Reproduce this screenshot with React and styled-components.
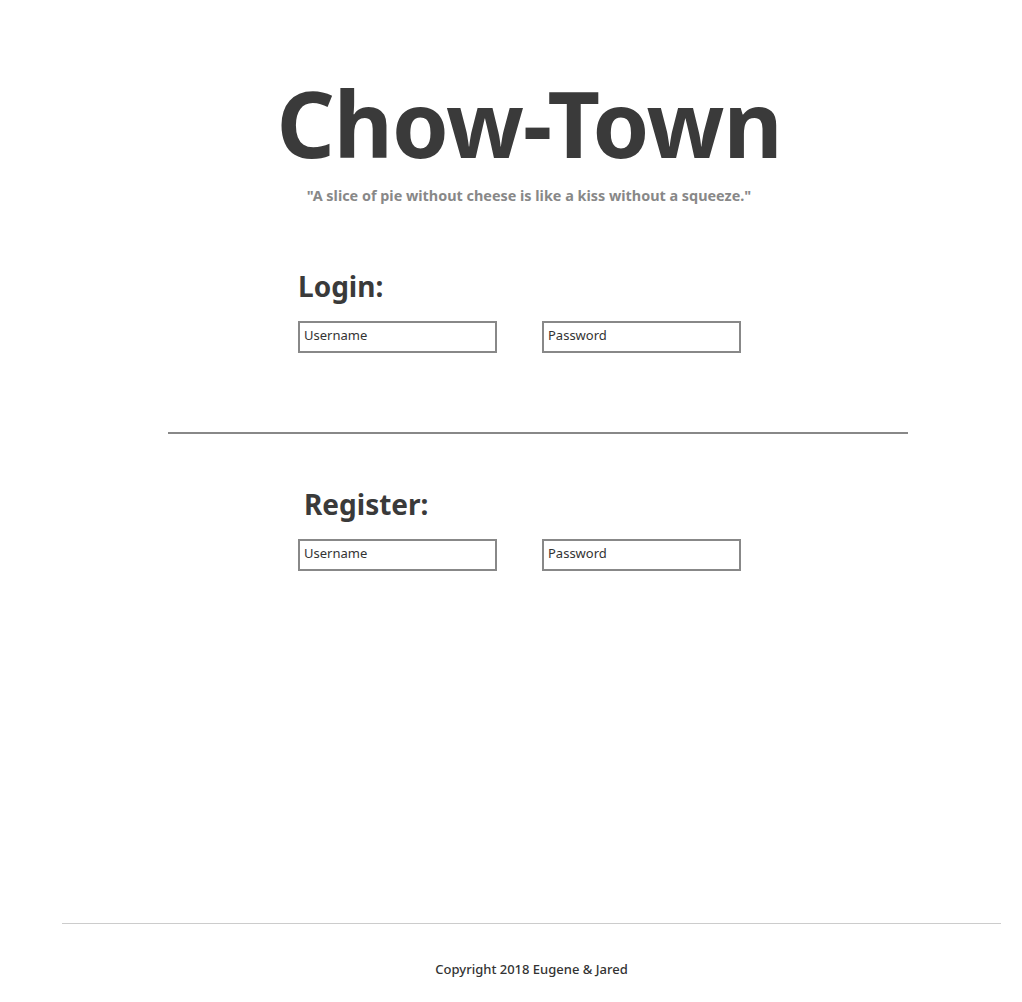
import React from "react";
import styled, { createGlobalStyle } from "styled-components";

const GlobalStyle = createGlobalStyle`
  html, body {
    margin: 0;
    padding: 0;
    background: #ffffff;
    font-family: "Noto Sans", "Open Sans", sans-serif;
    color: #3a3a3a;
  }
`;

const Page = styled.div`
  width: 1022px;
  min-height: 1002px;
  display: flex;
  flex-direction: column;
`;

const Header = styled.header`
  display: flex;
  flex-direction: column;
  align-items: center;
  padding-top: 65px;
  padding-left: 36px;
`;

const Title = styled.h1`
  margin: 0;
  font-size: 91px;
  line-height: 116px;
  font-weight: 700;
  color: #3a3a3a;
  letter-spacing: -1px;
`;

const Quote = styled.p`
  margin: 5px 0 0;
  font-size: 14.4px;
  font-weight: 700;
  color: #888888;
`;

const Section = styled.section`
  padding-left: 298px;
  display: flex;
  flex-direction: column;
`;

const Heading = styled.h2`
  margin: 0;
  padding-left: ${(p) => p.shift || 0}px;
  font-size: 28px;
  line-height: 36px;
  font-weight: 700;
  color: #3a3a3a;
`;

const Row = styled.div`
  display: flex;
  gap: 45px;
  margin-top: 17px;
`;

const Field = styled.input`
  box-sizing: border-box;
  width: 199px;
  height: 32px;
  border: 2px solid #888888;
  padding: 0 4px 4px;
  font-family: inherit;
  font-size: 13px;
  color: #333;
  outline: none;
  &::placeholder {
    color: #333333;
    opacity: 1;
  }
`;

const Divider = styled.hr`
  width: 740px;
  margin: 79px 0 52px 168px;
  border: none;
  border-top: 2px solid #888888;
`;

const Spacer = styled.div`
  flex: 1;
`;

const Footer = styled.footer`
  display: flex;
  flex-direction: column;
  align-items: center;
  padding: 0 21px 24px 62px;
`;

const FooterRule = styled.hr`
  align-self: stretch;
  margin: 0;
  border: none;
  border-top: 1px solid #cccccc;
`;

const Copy = styled.p`
  margin: 36px 0 0;
  font-size: 13px;
  font-weight: 500;
  color: #333333;
`;

const Gap = styled.div`
  height: ${(p) => p.size}px;
`;

const AuthForm = ({ label, shift }) => (
  <Section>
    <Heading shift={shift}>{label}</Heading>
    <Row>
      <Field type="text" placeholder="Username" />
      <Field type="password" placeholder="Password" />
    </Row>
  </Section>
);

export default function App() {
  return (
    <Page>
      <GlobalStyle />
      <Header>
        <Title>Chow-Town</Title>
        <Quote>"A slice of pie without cheese is like a kiss without a squeeze."</Quote>
      </Header>
      <Gap size={63} />
      <AuthForm label="Login:" />
      <Divider />
      <AuthForm label="Register:" shift={6} />
      <Spacer />
      <Footer>
        <FooterRule />
        <Copy>Copyright 2018 Eugene &amp; Jared</Copy>
      </Footer>
    </Page>
  );
}
